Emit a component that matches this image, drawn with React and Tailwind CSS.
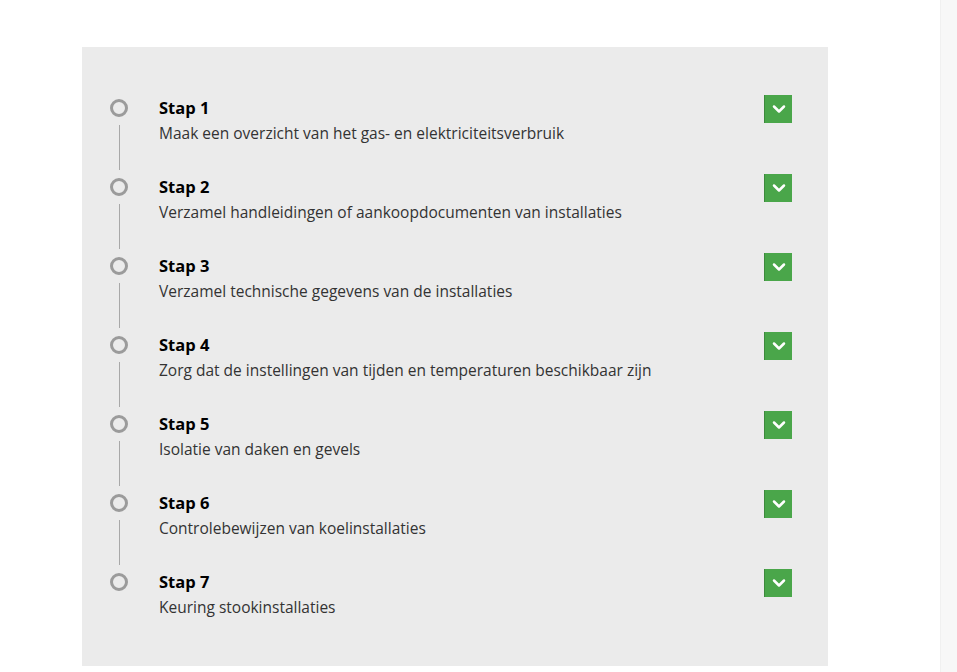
import { ChevronDown } from 'lucide-react';

const steps = [
  { title: 'Stap 1', text: 'Maak een overzicht van het gas- en elektriciteitsverbruik' },
  { title: 'Stap 2', text: 'Verzamel handleidingen of aankoopdocumenten van installaties' },
  { title: 'Stap 3', text: 'Verzamel technische gegevens van de installaties' },
  { title: 'Stap 4', text: 'Zorg dat de instellingen van tijden en temperaturen beschikbaar zijn' },
  { title: 'Stap 5', text: 'Isolatie van daken en gevels' },
  { title: 'Stap 6', text: 'Controlebewijzen van koelinstallaties' },
  { title: 'Stap 7', text: 'Keuring stookinstallaties' },
];

function Step({ step, last }) {
  return (
    <div className="flex items-start h-[79px]">
      {/* Timeline marker */}
      <div className="flex flex-col items-center w-[18px] h-full shrink-0">
        <div className="mt-[3px] w-[18px] h-[18px] rounded-full border-[3px] border-[#9b9b9b]" />
        {!last && <div className="w-px flex-1 bg-[#a8a8a8] mt-2 mb-[5px]" />}
      </div>

      <div className="flex-1 ml-[31px]">
        <h3 className="text-[16.5px] leading-6 font-bold text-black">{step.title}</h3>
        <p className="mt-px text-[15.5px] leading-6 text-[#333]">{step.text}</p>
      </div>

      <button
        type="button"
        className="-mt-px w-7 h-7 flex items-center justify-center bg-[#4aa64a] border-l border-[#3c8a3c]"
        aria-label={`Open ${step.title}`}
      >
        <ChevronDown className="w-5 h-5 text-white" strokeWidth={3} />
      </button>
    </div>
  );
}

export default function App() {
  return (
    <div className="flex min-h-screen bg-white font-['Open_Sans',sans-serif]">
      <div className="flex-1">
        <div className="ml-[82px] mt-[47px] w-[746px] bg-[#ebebeb] pl-[28px] pr-[36px] pt-[49px] pb-[17px]">
          {steps.map((s, i) => (
            <Step key={s.title} step={s} last={i === steps.length - 1} />
          ))}
        </div>
      </div>
      <div className="w-[17px] bg-[#f7f7f7] border-l border-[#f0f0f0]" />
    </div>
  );
}
